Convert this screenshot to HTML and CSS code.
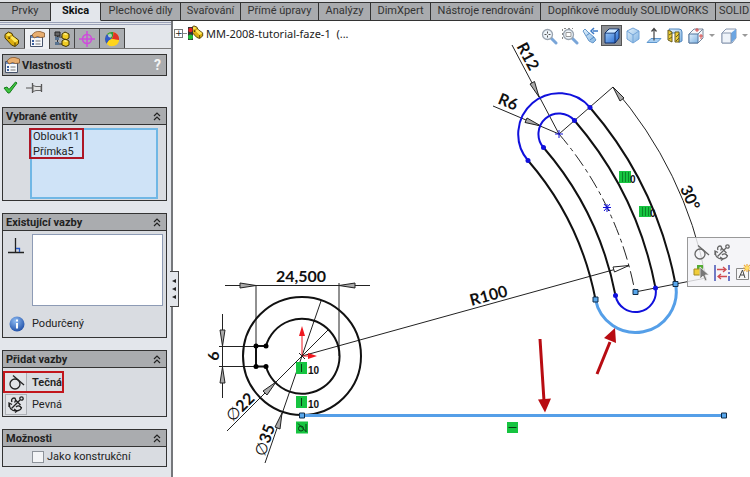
FILE: index.html
```html
<!DOCTYPE html>
<html lang="cs">
<head>
<meta charset="utf-8">
<title>MM-2008-tutorial-faze-1</title>
<link rel="stylesheet" href="styles.css">
</head>
<body>
<svg class="defs" aria-hidden="true">
  <defs>
    <linearGradient id="blue" x1="0" y1="0" x2="1" y2="1"><stop offset="0" stop-color="#a9d4fb"/><stop offset="1" stop-color="#1d62cf"/></linearGradient>
    <linearGradient id="pale" x1="0" y1="0" x2="1" y2="1"><stop offset="0" stop-color="#e4f2fc"/><stop offset="1" stop-color="#7fb2e2"/></linearGradient>
    <radialGradient id="ball" cx=".4" cy=".3" r=".8"><stop offset="0" stop-color="#8fbcf3"/><stop offset="1" stop-color="#1545a0"/></radialGradient>
    <symbol id="part" viewBox="0 0 16 16">
      <path d="M1 3.500 4.500 1 8 2.500 9 5l5.500 4v3.500L11 15.500 7.500 14 1 7z" fill="#dcae10" stroke="#4a3a00" stroke-linejoin="round"/>
      <path d="M2 4l2.500-2L7.500 3.200 5 5.500zM6 6.500l2.500-1.500L14 9.500 11 11.500z" fill="#ffe95a"/>
      <path d="M5 5.500V8l1-1.500M11 11.500V15" fill="none" stroke="#4a3a00"/>
    </symbol>
    <symbol id="props" viewBox="0 0 16 16">
      <path d="M1.500 4.500h12v11h-12z" fill="#f6f8fb" stroke="#46536b"/>
      <path d="M2 5h11v2H2z" fill="#6d8fc4"/>
      <path d="M3 9h2v2H3zM3 12h2v2H3z" fill="#3b5f9e"/><path d="M6.500 10h5M6.500 13h5" stroke="#777"/>
      <path d="M3 4c2-3 5-4 8-3.500L15.500 2v4l-4 .5-3-1L5 7z" fill="#e8ae70" stroke="#7b4a1e" stroke-width=".7"/>
    </symbol>
    <symbol id="chev" viewBox="0 0 8 9"><path d="M1 4l3-3 3 3M1 8l3-3 3 3" fill="none" stroke="#222" stroke-width="1.200"/></symbol>
    <symbol id="tangent" viewBox="0 0 18 18"><circle cx="8" cy="11" r="5" fill="none" stroke="currentColor" stroke-width="1.300"/><path d="M6 2.500 17 12" stroke="currentColor" stroke-width="1.300"/></symbol>
    <symbol id="anchor" viewBox="0 0 18 18">
      <g fill="none" stroke="currentColor" stroke-width="1.300"><path d="M4.500 13.500 13 5M8.500 5l5 5"/><circle cx="14.500" cy="3.500" r="1.700"/><path d="M2.500 8.500C2 13 4 16 9.500 16M2 12V8l3 1.500M7 14l3 2-2 1.500M9.500 16c3-.5 5-2 5-4M5 7c-1-2 0-4 2-4s2 3 .5 4.500M9 12c2-2 5-1 5 1"/></g>
    </symbol>
    <symbol id="glass" viewBox="0 0 18 18"><path d="M11 11l5 5" stroke="#79a5d8" stroke-width="3" stroke-linecap="round"/><circle cx="7.500" cy="7.500" r="5" fill="#edf4fa" stroke="#9aa4b0" stroke-width="1.300"/></symbol>
  </defs>
</svg>

<nav class="ribbon">
  <a href="#">Prvky</a>
  <a href="#" class="active" aria-current="page">Skica</a>
  <a href="#">Plechové díly</a>
  <a href="#">Svařování</a>
  <a href="#">Přímé úpravy</a>
  <a href="#">Analýzy</a>
  <a href="#">DimXpert</a>
  <a href="#">Nástroje rendrování</a>
  <a href="#">Doplňkové moduly SOLIDWORKS</a>
  <a href="#">SOLID</a>
</nav>

<div class="workspace">
  <aside class="sidebar">
    <div class="managers">
      <button type="button" aria-label="FeatureManager"><svg width="16" height="16"><use href="#part"/></svg></button>
      <button type="button" class="active" aria-label="PropertyManager"><svg width="16" height="16"><use href="#props"/></svg></button>
      <button type="button" aria-label="ConfigurationManager"><svg width="16" height="16" viewBox="0 0 16 16"><path d="M3.500 3v10H9M3.500 6H8" fill="none" stroke="#333"/><path d="M1 1h5v4H1z" fill="#666" stroke="#222"/><path d="M1 6h4v3H1zM1 11h4v3H1z" fill="#56718f"/><path d="M8 3l3-2 4 2v4l-3 2-4-2zM8 10l3-2 4 2v4l-3 1.500L8 14z" fill="#f0cc24" stroke="#423500"/><path d="M9 3l2-1 3 1-2 1zM9 10l2-1 3 1-2 1z" fill="#fff08a"/></svg></button>
      <button type="button" aria-label="DimXpertManager"><svg width="16" height="16" viewBox="0 0 16 16"><g fill="none" stroke="#cf4bdc" stroke-width="1.500"><circle cx="8" cy="8" r="4.500"/><path d="M8 0v16M0 8h16"/></g></svg></button>
      <button type="button" aria-label="DisplayManager"><svg width="16" height="16" viewBox="0 0 16 16"><circle cx="8" cy="8" r="7" fill="#ffd51d"/><path d="M8 8 3 3a7 7 0 0 1 6-2q1 3-1 7z" fill="#2a9a3b"/><path d="M9 1a7 7 0 0 1 6 8Q12 9 8 8q2-4 1-7z" fill="#e03127"/><path d="M8 8 3 3a7 7 0 0 0 0 10Q4 9 8 8z" fill="#3159c7"/><path d="M3 13q1-4 5-5 4 1 7 1a7 7 0 0 1-12 4z" fill="#ffd51d"/><circle cx="6" cy="4.500" r="2" fill="#fff" opacity=".6"/></svg></button>
    </div>

    <header class="title">
      <svg width="16" height="16"><use href="#props"/></svg>
      <h1>Vlastnosti</h1>
      <button type="button" class="help">?</button>
    </header>
    <div class="confirm">
      <button type="button" aria-label="OK"><svg width="15" height="13" viewBox="0 0 15 13"><path d="M1 7l3-1 2 2.500L12.500 1 14 2 6.500 12H5z" fill="#3fc43f" stroke="#157c1c"/></svg></button>
      <button type="button" aria-label="Připnout"><svg width="17" height="12" viewBox="0 0 17 12"><path d="M0 6h6" stroke="#555"/><path d="M6.500 1v10M15.500 2v8" stroke="#555" stroke-width="1.300"/><path d="M7 3.500l3 1h5v4h-5l-3 1z" fill="#e2e2e2" stroke="#666"/></svg></button>
    </div>

    <section class="panel">
      <h2>Vybrané entity <svg width="8" height="9"><use href="#chev"/></svg></h2>
      <div class="selection">
        <select multiple size="4" aria-label="Vybrané entity"><option>Oblouk11</option><option>Přímka5</option></select>
        <span class="mark"></span>
      </div>
    </section>

    <section class="panel">
      <h2>Existující vazby <svg width="8" height="9"><use href="#chev"/></svg></h2>
      <div class="existing">
        <svg width="18" height="18" viewBox="0 0 18 18"><path d="M8.500 1v14M1 15.500h16" stroke="#222" stroke-width="1.300"/><path d="M9 11.500h3.500V15" fill="none" stroke="#2458c8" stroke-width="1.300"/></svg>
        <select multiple size="4" aria-label="Existující vazby"></select>
      </div>
      <p class="status">
        <svg width="16" height="16" viewBox="0 0 16 16"><circle cx="8" cy="8" r="7.500" fill="url(#ball)"/><path d="M8 7v5.500M8 3.500v2" stroke="#fff" stroke-width="2"/></svg>
        Podurčený
      </p>
    </section>

    <section class="panel">
      <h2>Přidat vazby <svg width="8" height="9"><use href="#chev"/></svg></h2>
      <div class="relations">
        <button type="button" class="suggested"><span><svg width="18" height="18"><use href="#tangent"/></svg></span>Tečná</button>
        <button type="button"><span><svg width="18" height="18"><use href="#anchor"/></svg></span>Pevná</button>
      </div>
    </section>

    <section class="panel">
      <h2>Možnosti <svg width="8" height="9"><use href="#chev"/></svg></h2>
      <label class="option"><input type="checkbox">Jako konstrukční</label>
    </section>

    <button type="button" class="collapse" aria-label="Sbalit panel"><svg width="4" height="22" viewBox="0 0 4 22"><path d="M4 1v4L0 3zM4 9v4l-4-2zM4 17v4l-4-2z" fill="#222"/></svg></button>
  </aside>

  <main class="canvas">
    <svg class="sketch" width="577" height="456" viewBox="173 21 577 456" role="img" aria-label="Skica">
      <g class="thin">
        <path d="M256 285v61M339 283v73M225 285.500h145M219 346.500h37M219 366.500h37M222.500 314v84"/>
        <path d="M227 431 328 330M265 463 321 301M302 356 629 265.500"/>
        <path d="M512 45 559 134M493 106 559 134M559 134 613 87M635 292 706 278"/>
        <path d="M613 87A411 411 0 0 1 706 278"/>
        <path d="M559 134A339.500 339.500 0 0 1 635 292" stroke-dasharray="14 4 4 4"/>
      </g>
      <g class="heads">
        <path d="M256 285.500l-16-2.500v5zM339 285.500l16-2.500v5zM222.500 346l-2.500-16h5zM222.500 367l-2.500 16h5z"/>
        <path d="M276 382l-13 9 4 4zM282 413l-7 14 5 2zM539 97l-9-13 4.500-2.500zM541 126l-16-3.500 2-4.500zM613 87l7 14 4-3z"/>
        <path class="open" d="M629 265.500l-16 1.500 1.500 5z"/>
      </g>
      <g class="solid">
        <circle cx="302" cy="356" r="59"/>
        <path d="M266 346A37.500 37.500 0 1 1 266 366.500H256V346z"/>
        <path d="M528 160.500A299 299 0 0 1 595.500 299.500M543.500 147.500A319 319 0 0 1 615.500 295.500M574.500 120.500A360 360 0 0 1 655.500 288M590 107.500A380 380 0 0 1 675.500 284"/>
        <g class="dots"><circle cx="256" cy="346" r="2.500"/><circle cx="266" cy="346" r="2.500"/><circle cx="256" cy="366.500" r="2.500"/><circle cx="266" cy="366.500" r="2.500"/></g>
      </g>
      <g class="free">
        <path d="M528 160.500A40.500 40.500 0 0 1 590 107.500M543.500 147.500A20.500 20.500 0 0 1 574.500 120.500M615.500 295.500A20.300 20.300 0 0 0 655.500 288"/>
        <path class="fine" d="M555 134h8M559 130v8M603 207.500h8M607 204v8M604 204l6 7M610 204l-6 7"/>
        <g class="dots"><circle cx="528" cy="160.500" r="2.500"/><circle cx="543.500" cy="147.500" r="2.500"/><circle cx="590" cy="107.500" r="2.500"/><circle cx="574.500" cy="120.500" r="2.500"/><circle cx="615.500" cy="295.500" r="2.500"/><circle cx="655.500" cy="288" r="2.500"/></g>
      </g>
      <g class="picked">
        <path d="M595.500 299.500A40.500 40.500 0 0 0 675.500 284M302 415.500H724"/>
        <path class="grip" d="M593 297h5v5h-5zM673 281.500h5v5h-5zM633 289.500h5v5h-5zM299.500 413h5v5h-5zM721.500 413h5v5h-5z"/>
      </g>
      <path class="origin" d="M302 356v-22M302 356h8"/>
      <path class="originhead" d="M302 326l3 10h-6zM317 356l-9 3v-6z"/>
      <path class="thin" d="M299 353l6 6M305 353l-6 6"/>

      <g class="tags">
        <path d="M296 362h11v12h-11zM296 396h11v12h-11zM296 421.500h12v12h-12zM507 422h11v11h-11zM619 171h12v12h-12zM639 206h12v11h-12z"/>
        <path class="glyphs" d="M301.500 364v8M301.500 398v8M508.500 427.500h8M298 423.500l8 8M306 424v8"/>
        <circle class="glyphs" cx="301" cy="428.500" r="2.500"/>
        <path class="ribs" d="M622.500 172v10M625.500 172v10M628.500 172v10M642.500 207v9M645.500 207v9M648.500 207v9"/>
        <text x="308" y="374">10</text><text x="308" y="408">10</text><text x="630" y="183">0</text><text x="650" y="217">0</text>
      </g>

      <g class="dims">
        <text x="301" y="282">24,500</text>
        <text transform="translate(219 356) rotate(-90)">6</text>
        <text transform="translate(244 411) rotate(-45)"><tspan class="dia">∅</tspan>22</text>
        <text transform="translate(270 442) rotate(-71)"><tspan class="dia">∅</tspan>35</text>
        <text transform="translate(490 301) rotate(-15)">R100</text>
        <text transform="translate(523 59) rotate(62)">R12</text>
        <text transform="translate(506 107) rotate(22)">R6</text>
        <text transform="translate(685 200) rotate(65)">30°</text>
      </g>

      <g class="pointers">
        <path d="M540 339l4 62M597 374l13-32"/>
        <path class="tip" d="M545 412.500l-7-13 13-1zM615 328l1 15-12-5z"/>
      </g>
    </svg>

    <div class="tree">
      <button type="button" aria-label="Rozbalit">+</button><span class="branch"></span>
      <svg width="17" height="16" viewBox="0 0 17 16"><svg x="3" width="14" height="14"><use href="#part"/></svg><path d="M1 2h5v13H1z" fill="#333"/><circle cx="3.500" cy="5" r="2.200" fill="#e32424"/><circle cx="3.500" cy="12" r="2.500" fill="#20c03a"/></svg>
      <span>MM-2008-tutorial-faze-1 &nbsp;(...</span>
    </div>

    <div class="view-tools">
      <button type="button" aria-label="Zobrazit vše"><svg width="18" height="18"><use href="#glass"/><path d="M7.500 4.500v6M4.500 7.500h6" stroke="#555" stroke-dasharray="2 2"/></svg></button>
      <button type="button" aria-label="Zvětšit oblast"><svg width="18" height="18"><path d="M1.500 12V1.500H12" fill="none" stroke="#888" stroke-dasharray="2 2"/><use href="#glass"/><path d="M5 5.500h5v4H5z" fill="#fff" stroke="#999"/></svg></button>
      <button type="button" aria-label="Předchozí pohled"><svg width="18" height="18" viewBox="0 0 18 18"><path d="M1 4l2-2 4 4 5 4 2 3-3 3-4-2-3-5z" fill="url(#pale)" stroke="#6798ca"/><path d="M4.500 8.500 8 6M8 13l4-3" stroke="#4e87c5"/><path d="M16 4h-5M12 1 9 4l3 3" fill="none" stroke="#3b78c5" stroke-width="1.500"/></svg></button>
      <button type="button" class="active" aria-label="Stínování s hranami"><svg width="18" height="18" viewBox="0 0 18 18"><path d="M2 6l4-4h10v9l-4 5H2z" fill="url(#blue)" stroke="#102e67" stroke-linejoin="round"/><path d="M2 6h10v10M12 6l4-4" fill="none" stroke="#102e67"/><path d="M3 5.500l3.500-3h8L11.500 5.500z" fill="#d0e8ff"/></svg></button>
      <button type="button" aria-label="Izometrie"><svg width="18" height="18" viewBox="0 0 18 18"><path d="M9 1l6 3v8l-6 4-6-4V4z" fill="url(#pale)" stroke="#73a4d8"/><path d="M3 4l6 4 6-4M9 8v8" fill="none" stroke="#73a4d8"/></svg></button>
      <button type="button" aria-label="Kolmo k"><svg width="18" height="18" viewBox="0 0 18 18"><path d="M6 11.500h10l-4 4H2z" fill="#a6cef2" stroke="#5e96cd"/><path d="M9 13.500V2M6.500 4.500 9 1.500l2.500 3" fill="none" stroke="#444" stroke-width="1.200"/></svg></button>
      <button type="button" aria-label="Řez"><svg width="18" height="18" viewBox="0 0 18 18"><path d="M3 2h10q3 0 3 3v9l-3 1.500V6H6z" fill="url(#pale)" stroke="#5187bf"/><path d="M2 3l4 2v10l-4-2zM9 5h4v10H9z" fill="#efcf35" stroke="#665a20"/><path d="M3 8l3-2M3 12l3-2M10 10l3-3M10 14l3-3" stroke="#665a20"/></svg></button>
      <button type="button" aria-label="Orientace pohledu"><svg width="18" height="18" viewBox="0 0 18 18"><path d="M2 7l5-5h9v9l-5 5H2z" fill="#f5f7fa" stroke="#78889d"/><path d="M2 7h9v9H2z" fill="url(#pale)" stroke="#52779f"/><path d="M11 7l5-5" stroke="#78889d"/><path d="M10 1v4M8 3h4M14 7v5M12 9h4" stroke="#d64949"/></svg></button>
      <button type="button" class="drop" aria-label="Více pohledů"></button>
      <button type="button" aria-label="Styl zobrazení"><svg width="18" height="18" viewBox="0 0 18 18"><path d="M2 6l4-4h10v9l-4 5H2z" fill="#f7f9fc" stroke="#8897af"/><path d="M11 6l5-4v9l-5 5z" fill="#6ba5e2"/><path d="M2 6h9v10H2z" fill="#eef3f9" stroke="#8897af"/></svg></button>
      <button type="button" class="drop" aria-label="Více stylů"></button>
    </div>

    <div class="context">
      <button type="button" aria-label="Tečná"><svg width="18" height="18"><use href="#tangent"/></svg></button>
      <button type="button" aria-label="Pevná"><svg width="18" height="18"><use href="#anchor"/></svg></button>
      <span></span>
      <button type="button" aria-label="Vybrat jiné"><svg width="18" height="18" viewBox="0 0 18 18"><path d="M5 1h6v8H5z" fill="#55ad35"/><path d="M2 5h6v6H2z" fill="#f1cd3a" stroke="#a28a23"/><path d="M8 3v12l3-3 2 5 2-1-2-5h4z" fill="#777" stroke="#eee" stroke-width=".8"/></svg></button>
      <button type="button" aria-label="Kóta"><svg width="18" height="18" viewBox="0 0 18 18"><path d="M2 1v16" stroke="#4350b5" stroke-width="1.500"/><path d="M16 1v16" stroke="#4350b5" stroke-width="1.500" stroke-dasharray="5 2 2 2"/><path d="M4 5.500h9M10 3l3 2.500L10 8M14 12.500H5M8 10l-3 2.500L8 15" fill="none" stroke="#d04a50" stroke-width="1.300"/></svg></button>
      <button type="button" aria-label="Poznámka"><svg width="18" height="18" viewBox="0 0 18 18"><path d="M2.500 4.500h12v11h-12z" fill="#f7f7f7" stroke="#888"/><path d="M5 14l3.500-8 2.500 8M6.500 11H10" fill="none" stroke="#444"/><path d="M13 0v8M9 4h8M10 1l6 6M16 1l-6 6" stroke="#efaa38" stroke-width="1.200"/><circle cx="13" cy="4" r="2" fill="#ffdf68"/></svg></button>
    </div>
  </main>
</div>
</body>
</html>
```
FILE: styles.css
```css
* { box-sizing: border-box; }

body {
  margin: 0;
  min-height: 100vh;
  display: flex;
  flex-direction: column;
  overflow: hidden;
  background: #fff;
  color: #222;
  font: 11px/15px Roboto, "Noto Sans", sans-serif;
}

.defs { position: absolute; width: 0; height: 0; }

button {
  margin: 0;
  padding: 0;
  border: 0;
  background: none;
  color: inherit;
  font: inherit;
}

svg { display: block; flex: none; }

/* Ribbon tabs */
.ribbon {
  display: grid;
  grid-template-columns: 51px 50px 80px 60px 78px 52px 60px 110px 175px minmax(34px, 1fr);
  height: 21px;
  padding-top: 2px;
  background: #dfe1e4;
  overflow: hidden;
  line-height: 16px;
}

.ribbon a {
  border: 1px solid #333;
  border-width: 1px 1px 1px 0;
  background: #a9abae;
  color: #333;
  text-align: center;
  text-decoration: none;
  white-space: nowrap;
}

.ribbon a:last-child { padding-left: 3px; border-right: 0; text-align: left; }

.ribbon .active {
  border-color: #333 #333 #e3e6eb;
  background: #e3e6eb;
  color: #111;
  font-weight: 700;
}

.workspace { display: flex; flex: 1; }

/* Property manager */
.sidebar {
  position: relative;
  flex: none;
  width: 173px;
  padding: 0 4px 0 2px;
  border-right: 2px solid #75777b;
  background: #e3e6eb;
}

.managers {
  display: flex;
  margin: 0 -4px 5px -2px;
  padding-top: 7px;
  border-bottom: 1px solid #777;
  background: linear-gradient(#e3e6eb 1px, #9ba2b8 1px 2px, #e3e6eb 2px 3px, #9ba2b8 3px 4px, #e3e6eb 4px);
}

.managers button {
  display: grid;
  place-items: center;
  width: 25px;
  height: 20px;
  border: 1px solid #444;
  border-width: 1px 1px 0 0;
  background: #aaadb1;
}

.managers button + button { width: 25px; }
.managers .active { margin-bottom: -1px; height: 21px; background: #eef0f3; }

.title {
  display: flex;
  align-items: center;
  gap: 2px;
  height: 22px;
  padding: 0 5px 0 1px;
  border: 1px solid #333;
  background: #aaacaf;
}

h1, h2 { margin: 0; font-size: 11px; line-height: 15px; font-weight: 700; }
h1 { flex: 1; }

.help { color: #f4f4f4; font-weight: 700; font-size: 14px; }

.confirm { display: flex; align-items: center; gap: 8px; height: 31px; padding: 0 1px 8px; }

.panel { margin-bottom: 12px; border: 1px solid #333; background: #d9dce1; }

.panel h2 {
  display: flex;
  align-items: center;
  justify-content: space-between;
  height: 17px;
  padding: 0 5px 0 3px;
  border-bottom: 1px solid #333;
  background: #aaacaf;
}

.panel select {
  display: block;
  width: 100%;
  height: 72px;
  padding: 0;
  border: 1px solid #8d9bb5;
  border-radius: 0;
  background: #fff;
  overflow: hidden;
  color: #222;
  font: inherit;
}

.panel option { padding: 0 1px; min-height: 15px; line-height: 15px; }

.selection { position: relative; padding: 3px 8px 1px 27px; }
.selection select { height: 71px; border: 2px solid #70b7e5; background: #cfe3f7; }
.mark { position: absolute; left: 26px; top: 3px; width: 55px; height: 31px; border: 2px solid #ad1625; }

.existing { display: flex; gap: 7px; padding: 3px 3px 0 4px; }
.existing > svg { margin-top: 3px; }

.status { display: flex; align-items: center; gap: 7px; margin: 0; padding: 10px 0 5px 6px; line-height: 16px; }

.relations { display: flex; flex-direction: column; align-items: flex-start; padding: 3px 0 1px; }
.relations button { display: flex; align-items: center; gap: 5px; height: 22px; border: 0 solid transparent; border-width: 0 3px 0 2px; }
.relations span { display: grid; place-items: center; width: 22px; height: 21px; border: 1px solid #aeb1b6; background: #e1e3e7; }
.relations .suggested { border: 2px solid #c2161c; font-weight: 600; }
.relations .suggested span { height: 18px; border-width: 0 1px 0 0; }

.option { display: flex; align-items: center; gap: 3px; height: 19px; padding-left: 29px; }
.option input { appearance: none; width: 12px; height: 12px; margin: 0; border: 1px solid #8e939a; background: #f3f4f6; }

.collapse {
  position: absolute;
  top: 250px;
  right: -8px;
  display: grid;
  place-items: center;
  width: 9px;
  height: 36px;
  border: 1px solid #444;
  border-left: 0;
  background: #e3e6eb;
}

/* Drawing area */
.canvas { position: relative; flex: 1; min-width: 0; overflow: hidden; }

.thin { fill: none; stroke: #222; stroke-width: 1; }
.heads { fill: #aaa; stroke: #222; stroke-width: 1; }
.heads .open { fill: #fff; }
.solid { fill: none; stroke: #111; stroke-width: 2; }
.solid .dots { fill: #000; stroke: none; }
.free { fill: none; stroke: #1010dc; stroke-width: 2; }
.free .fine { stroke-width: 1; }
.free .dots { fill: #1010dc; stroke: none; }
.picked { fill: none; stroke: #559fe8; stroke-width: 3; }
.picked .grip { fill: #58a7ec; stroke: #102c48; stroke-width: 1; }
.origin { fill: none; stroke: #f01820; stroke-width: 1; }
.originhead { fill: #f01820; }

.tags { fill: #16c440; font: 700 10px "Liberation Sans", sans-serif; }
.tags text { fill: #111; }
.tags .glyphs { fill: none; stroke: #083d14; stroke-width: 1; }
.tags .ribs { stroke: #0b8428; stroke-width: 1; }

.dims { fill: #111; font: 700 16px Lato, sans-serif; text-anchor: middle; }
.dims .dia { font: 16px "DejaVu Sans", sans-serif; }

.pointers { fill: none; stroke: #b80c12; stroke-width: 3; }
.pointers .tip { fill: #b80c12; stroke: none; }

.tree {
  position: absolute;
  left: 1px;
  top: 4px;
  display: flex;
  align-items: center;
  font: 11px/15px "Noto Sans", sans-serif;
}

.tree button { width: 9px; height: 9px; border: 1px solid #777; font: 9px/7px "DejaVu Sans", sans-serif; }
.branch { width: 4px; border-top: 1px solid #888; }
.tree > svg { margin-right: 2px; }

.view-tools { position: absolute; top: 4px; right: -1px; display: flex; }
.view-tools button { display: grid; place-items: center; width: 21px; height: 21px; }
.view-tools .active { border: 1px solid #555; background: #8c8f94; }
.view-tools .drop { width: 12px; }
.view-tools .drop::before { content: ""; border: 3px solid transparent; border-top-color: #999; border-bottom: 0; }

.context {
  position: absolute;
  top: 216px;
  left: 514px;
  display: grid;
  grid-template-columns: repeat(3, 21px);
  grid-auto-rows: 21px;
  padding: 3px 2px;
  border: 1px solid #999;
  background: rgba(243, 243, 247, .82);
  color: #666;
}

.context button { display: grid; place-items: center; }
```
